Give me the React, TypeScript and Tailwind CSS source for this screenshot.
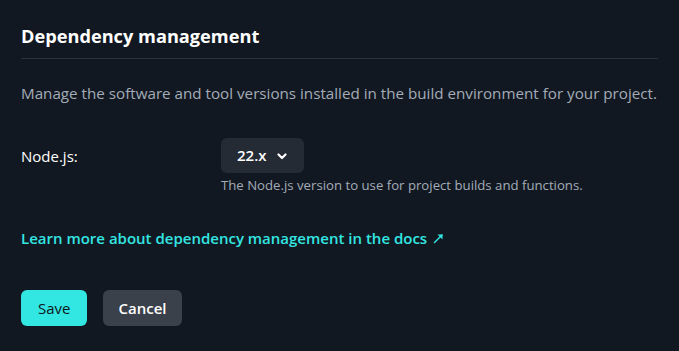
export default function App() {
  return (
    <div
      className="min-h-[351px] w-[679px] bg-[#121821] px-[21px] pt-[24px] text-white"
      style={{ fontFamily: '"Open Sans", "Noto Sans", sans-serif' }}
    >
      <h2 className="border-b border-[#2b313b] pb-[10px] text-[18.2px] font-bold leading-[24px]">
        Dependency management
      </h2>

      <p className="mt-[23px] whitespace-nowrap text-[15.2px] leading-[22px] text-[#a3acb8]">
        Manage the software and tool versions installed in the build environment for your project.
      </p>

      <div className="mt-[34px] flex">
        <div className="w-[200px] pt-[7px] text-[15px] leading-[22px]">Node.js:</div>
        <div>
          <button className="flex h-[35px] items-center gap-[10px] rounded-[6px] bg-[#252b35] pl-[16px] pr-[17px] text-[15px] font-semibold">
            22.x
            <svg width="10" height="7" viewBox="0 0 10 7" className="mt-[1px]">
              <path d="M1.5 1.5 L5 5 L8.5 1.5" fill="none" stroke="white" strokeWidth="2.2" strokeLinecap="round" strokeLinejoin="round" />
            </svg>
          </button>
          <p className="mt-[2px] text-[13.2px] leading-[20px] text-[#a3acb8]">
            The Node.js version to use for project builds and functions.
          </p>
        </div>
      </div>

      <a className="mt-[32px] flex items-center gap-[6px] text-[15px] font-semibold leading-[22px] text-[#32e6e2]">
        Learn more about dependency management in the docs
        <svg width="11" height="11" viewBox="0 0 11 11">
          <path d="M1.5 9.5 L9 2" fill="none" stroke="#32e6e2" strokeWidth="1.5" strokeLinecap="round" />
          <path d="M4.5 1.5 L9.5 1.5 L9.5 6.5 Z" fill="#32e6e2" />
        </svg>
      </a>

      <div className="mt-[41px] flex gap-[16px]">
        <button className="h-[36px] rounded-[6px] bg-[#32e6e2] px-[17px] text-[15px] text-[#0f1720]">
          Save
        </button>
        <button className="h-[36px] rounded-[6px] bg-[#3b414b] px-[15px] text-[15px] font-semibold">
          Cancel
        </button>
      </div>
    </div>
  );
}
